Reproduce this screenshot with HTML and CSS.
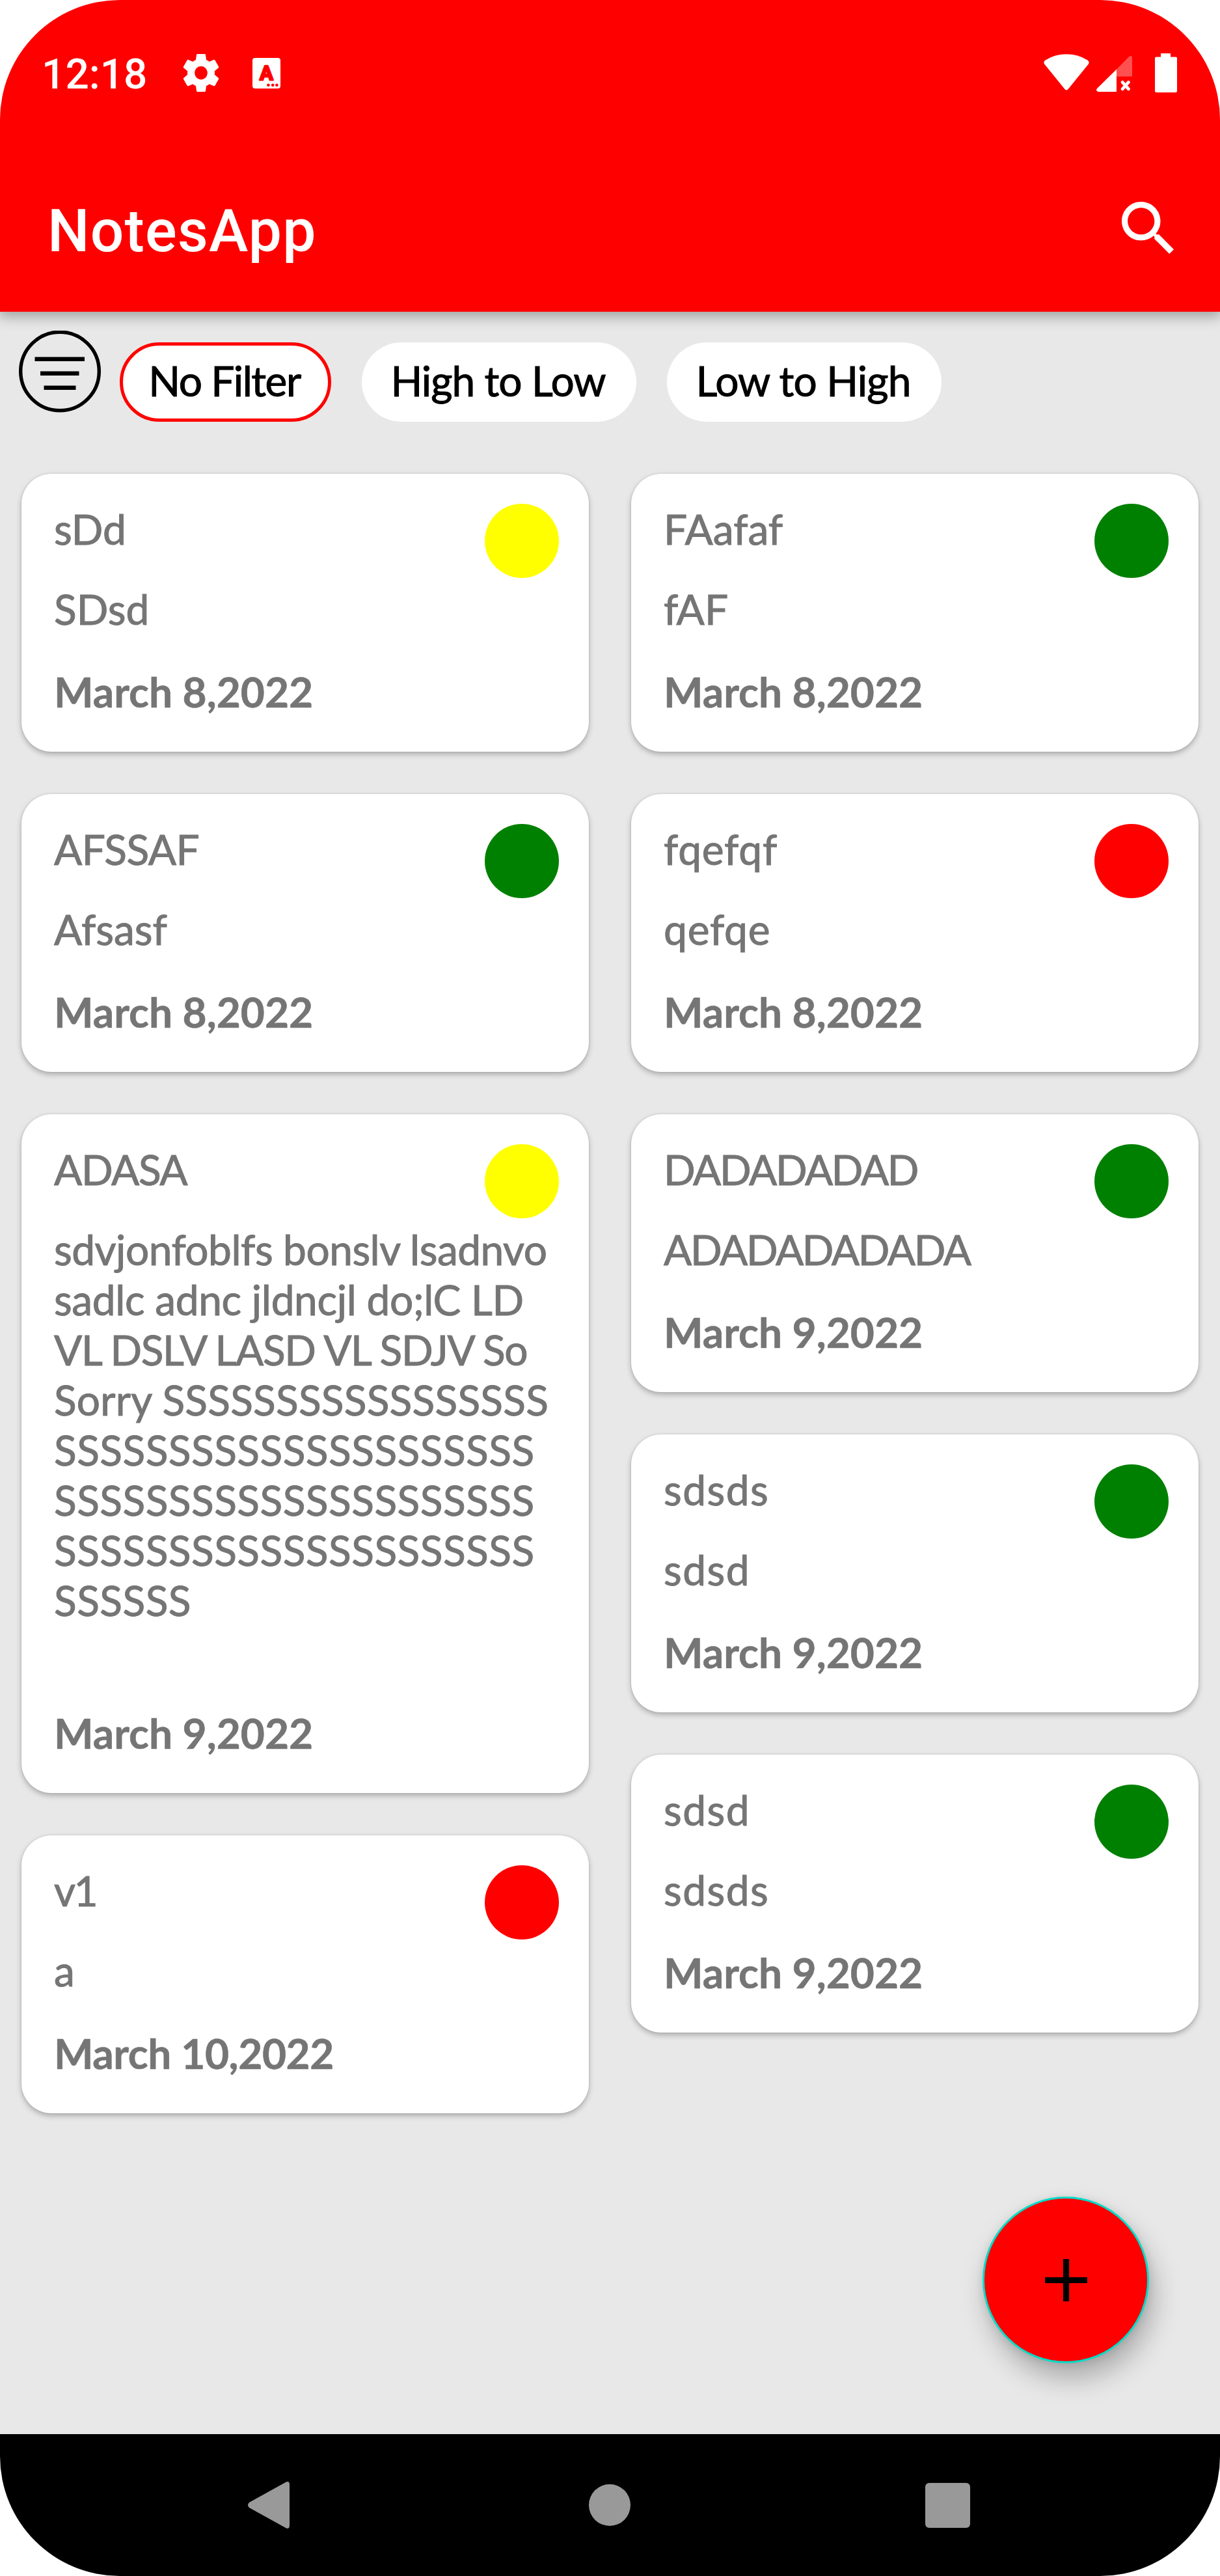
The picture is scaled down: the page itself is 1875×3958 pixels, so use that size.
FILE: index.html
```html
<!DOCTYPE html>
<html lang="en">
<head>
<meta charset="utf-8">
<title>NotesApp</title>
<link rel="stylesheet" href="styles.css">
</head>
<body>
<div class="screen">
  <header class="app-header">
    <div class="status-bar">
      <span class="clock">12:18</span>
      <svg class="icon-gear" viewBox="2 2 20 20" preserveAspectRatio="none" fill="#fff"><path d="M19.43 12.98c.04-.32.07-.64.07-.98s-.03-.66-.07-.98l2.11-1.65c.19-.15.24-.42.12-.64l-2-3.46c-.12-.22-.39-.3-.61-.22l-2.49 1c-.52-.4-1.08-.73-1.69-.98l-.38-2.65C14.46 2.18 14.25 2 14 2h-4c-.25 0-.46.18-.49.42l-.38 2.65c-.61.25-1.17.59-1.69.98l-2.49-1c-.23-.09-.49 0-.61.22l-2 3.46c-.13.22-.07.49.12.64l2.11 1.65c-.04.32-.07.65-.07.98s.03.66.07.98l-2.11 1.65c-.19.15-.24.42-.12.64l2 3.46c.12.22.39.3.61.22l2.49-1c.52.4 1.08.73 1.69.98l.38 2.65c.03.24.24.42.49.42h4c.25 0 .46-.18.49-.42l.38-2.65c.61-.25 1.17-.59 1.69-.98l2.49 1c.23.09.49 0 .61-.22l2-3.46c.12-.22.07-.49-.12-.64l-2.11-1.65zM12 15.5c-1.93 0-3.5-1.57-3.5-3.5s1.57-3.5 3.5-3.5 3.5 1.57 3.5 3.5-1.57 3.5-3.5 3.5z"/></svg>
      <svg class="icon-keyboard" viewBox="0 0 43 47"><rect width="43" height="47" rx="4" fill="#fff"/><text class="badge-letter" x="21.5" y="33.5" text-anchor="middle">A</text><g fill="#f00"><circle cx="24.4" cy="41.7" r="2.3"/><circle cx="31.2" cy="41.7" r="2.3"/><circle cx="37.4" cy="41.7" r="2.3"/></g></svg>
      <span class="spacer"></span>
      <svg class="icon-wifi" viewBox="0 0 70 56"><path d="M1.2 15.5Q-1 12 2.500 9.500Q17 .3 35 .3T67.500 9.500Q71 12 68.800 15.500L38 53.500Q35 57.500 32 53.500Z" fill="#fff"/></svg>
      <svg class="icon-signal" viewBox="0 0 55 55"><path d="M31 20.500V55H3Q-1.500 54 1 50Z" fill="#fff"/><path d="M31 20.500L50 1.200Q54 -1.500 55 2V31.500H31Z" fill="#ff5050"/><path d="M40 40.200L49.500 50.800M49.500 40.200L40 50.800" stroke="#fff" stroke-width="4.800" stroke-linecap="round"/></svg>
      <svg class="icon-battery" viewBox="0 0 34 60"><path d="M9 0H24V5.500H32Q34 5.500 34 7.500V58Q34 60 32 60H2Q0 60 0 58V7.500Q0 5.500 2 5.500H9Z" fill="#fff"/></svg>
    </div>
    <div class="toolbar">
      <h1 class="app-title">NotesApp</h1>
      <svg class="icon-search" viewBox="3 3 17.490 17.490" fill="#fff"><path d="M15.500 14h-.79l-.28-.27C15.410 12.590 16 11.110 16 9.500 16 5.910 13.090 3 9.500 3S3 5.910 3 9.500 5.910 16 9.500 16c1.610 0 3.090-.59 4.230-1.570l.27.28v.79l5 4.990L20.490 19l-4.990-5zm-6 0C7.010 14 5 11.990 5 9.500S7.010 5 9.500 5 14 7.010 14 9.500 11.990 14 9.500 14z"/></svg>
    </div>
  </header>

  <main class="content">
    <div class="filters">
      <svg class="icon-filter" viewBox="0 0 126 126" fill="none" stroke="#000"><circle cx="63" cy="62.500" r="60.300" stroke-width="5.400"/><path d="M24.500 43.700H101M33 65.700H92.500M38.500 87.700H87.500" stroke-width="6.500"/></svg>
      <button class="chip chip-none is-selected">No Filter</button>
      <button class="chip chip-high">High to Low</button>
      <button class="chip chip-low">Low to High</button>
    </div>

    <div class="board">
      <section class="column">
        <article class="note">
          <div class="note-text"><p>sDd</p><p>SDsd</p><time>March 8,2022</time></div>
          <span class="priority medium"></span>
        </article>
        <article class="note">
          <div class="note-text"><p class="caps-mixed">AFSSAF</p><p>Afsasf</p><time>March 8,2022</time></div>
          <span class="priority low"></span>
        </article>
        <article class="note">
          <div class="note-text"><p class="caps-short">ADASA</p>
            <p class="note-body"><span class="line prose">sdvjonfoblfs bonslv lsadnvo</span><span class="line prose-tight">sadlc adnc jldncjl do;lC LD</span><span class="line shout">VL DSLV LASD VL SDJV So</span><span class="line sorry">Sorry SSSSSSSSSSSSSSSSS</span><span class="line esses">SSSSSSSSSSSSSSSSSSSSS</span><span class="line esses">SSSSSSSSSSSSSSSSSSSSS</span><span class="line esses">SSSSSSSSSSSSSSSSSSSSS</span><span class="line esses">SSSSSS</span><span class="line">&nbsp;</span></p>
            <time>March 9,2022</time></div>
          <span class="priority medium"></span>
        </article>
        <article class="note">
          <div class="note-text"><p class="caps">v1</p><p>a</p><time class="long-date">March 10,2022</time></div>
          <span class="priority high"></span>
        </article>
      </section>
      <section class="column">
        <article class="note">
          <div class="note-text"><p>FAafaf</p><p>fAF</p><time>March 8,2022</time></div>
          <span class="priority low"></span>
        </article>
        <article class="note">
          <div class="note-text"><p class="loose">fqefqf</p><p class="loose">qefqe</p><time>March 8,2022</time></div>
          <span class="priority high"></span>
        </article>
        <article class="note">
          <div class="note-text"><p class="caps">DADADADAD</p><p class="caps">ADADADADADA</p><time>March 9,2022</time></div>
          <span class="priority low"></span>
        </article>
        <article class="note">
          <div class="note-text"><p class="looser">sdsds</p><p class="looser">sdsd</p><time>March 9,2022</time></div>
          <span class="priority low"></span>
        </article>
        <article class="note">
          <div class="note-text"><p class="looser">sdsd</p><p class="looser">sdsds</p><time>March 9,2022</time></div>
          <span class="priority low"></span>
        </article>
      </section>
    </div>

    <button class="fab" aria-label="Add note"><svg viewBox="0 0 65 65" stroke="#000" stroke-width="9.200"><path d="M32.500 0V65M0 32.500H65"/></svg></button>
  </main>

  <nav class="system-nav">
    <svg class="nav-back" viewBox="0 0 64 72" fill="#999"><path d="M2 32L58 1Q64 -2 64 5V67Q64 74 58 71L2 40Q-2 36 2 32Z"/></svg>
    <svg class="nav-home" viewBox="0 0 64 64" fill="#999"><circle cx="32" cy="32" r="32"/></svg>
    <svg class="nav-recent" viewBox="0 0 69 69" fill="#999"><rect width="69" height="69" rx="6"/></svg>
  </nav>
</div>
</body>
</html>
```
FILE: styles.css
```css
* { box-sizing: border-box; }
body { margin: 0; background: #fff; }
svg { display: block; flex: none; }
h1, p { margin: 0; }
button { border: 0; padding: 0; font: inherit; }

.screen {
  width: 1875px;
  height: 3958px;
  display: flex;
  flex-direction: column;
  overflow: hidden;
  border-radius: 184px;
  font-family: Lato, sans-serif;
  font-size: 64px;
  line-height: 77px;
}

.app-header {
  position: relative;
  z-index: 1;
  height: 479px;
  flex: none;
  background: #f00;
  color: #fff;
  font-family: Roboto, sans-serif;
  box-shadow: 0 5px 20px 2px rgba(0, 0, 0, .32);
}
.status-bar {
  display: flex;
  align-items: center;
  height: 224px;
  padding: 0 66px 0 64px;
}
.clock { font-size: 64px; font-weight: 500; width: 217px; padding-top: 4px; }
.icon-gear { width: 56px; height: 58px; }
.icon-keyboard { width: 43px; height: 47px; margin: 1px 0 0 51px; }
.badge-letter {
  font: bold 31px Roboto, sans-serif;
  fill: #f00;
  stroke: #f00;
  stroke-width: 2.5px;
  stroke-linejoin: round;
}
.spacer { flex: 1; }
.icon-wifi { width: 70px; height: 56px; margin-bottom: 2px; }
.icon-signal { width: 55px; height: 55px; margin: 3px 35px 0 11px; }
.icon-battery { width: 34px; height: 60px; }
.toolbar {
  display: flex;
  align-items: center;
  justify-content: space-between;
  height: 255px;
  padding: 0 71px 0 73px;
}
.app-title { font-size: 91px; line-height: 110px; font-weight: 500; letter-spacing: 1.2px; padding-top: 7px; }
.icon-search { width: 80px; height: 80px; margin-bottom: 3px; }

.content {
  position: relative;
  flex: 1;
  padding: 29px 33px 0 29px;
  background: #e8e8e8;
}
.filters { display: flex; align-items: flex-start; height: 220px; }
.icon-filter { width: 126px; height: 126px; }
.chip {
  height: 122px;
  margin: 18px 0 0 47px;
  padding: 0 3px 5px 0;
  border-radius: 61px;
  background: #fff;
  color: #000;
  -webkit-text-stroke: 1px #000;
}
.chip-none { width: 325px; margin-left: 29px; letter-spacing: -1.5px; }
.chip-high { width: 422px; letter-spacing: -1px; }
.chip-low { width: 422px; letter-spacing: -.9px; }
.is-selected { border: 5px solid #f00; }

.board {
  display: grid;
  grid-template-columns: 872px 872px;
  column-gap: 65px;
  margin-left: 4px;
}
.column { display: flex; flex-direction: column; gap: 65px; }
.note {
  display: flex;
  justify-content: space-between;
  padding: 46px 46px 54px 50px;
  border-radius: 46px;
  background: #fff;
  color: #757575;
  box-shadow: 0 4px 8px rgba(0, 0, 0, .26), 0 0 3px rgba(0, 0, 0, .12);
}
.note-text {
  display: flex;
  flex-direction: column;
  width: 0;
  white-space: nowrap;
  -webkit-text-stroke: 1px #757575;
}
.note-text p + p { margin-top: 46px; }
.note-text time { margin-top: 50px; font-weight: 700; -webkit-text-stroke: .6px #757575; }
.note-text .long-date { letter-spacing: -.4px; }
.line { display: block; }
.caps-mixed { letter-spacing: -.6px; }
.caps-short { letter-spacing: -1.4px; }
.caps { letter-spacing: -2.4px; }
.loose { letter-spacing: .8px; }
.looser { letter-spacing: 1.5px; }
.prose { letter-spacing: -.5px; }
.prose-tight { letter-spacing: -.35px; }
.shout { letter-spacing: -1.4px; }
.sorry { letter-spacing: .2px; }
.esses { letter-spacing: .45px; }

.priority { width: 114px; height: 114px; flex: none; border-radius: 50%; }
.high { background: #f00; }
.medium { background: #ff0; }
.low { background: #008000; }

.fab {
  position: absolute;
  right: 109px;
  bottom: 109px;
  width: 256px;
  height: 256px;
  display: flex;
  align-items: center;
  justify-content: center;
  border: 3px solid #00dcc8;
  border-radius: 50%;
  background: #f00;
  box-shadow: 8px 24px 40px rgba(0, 0, 0, .26), 0 2px 14px rgba(0, 0, 0, .1);
}
.fab svg { width: 65px; height: 65px; }

.system-nav {
  display: flex;
  align-items: center;
  justify-content: space-between;
  height: 218px;
  flex: none;
  padding: 0 384px 0 381px;
  background: #000;
}
.nav-back { width: 64px; height: 72px; }
.nav-home { width: 64px; height: 64px; margin-left: 6px; }
.nav-recent { width: 69px; height: 69px; }
```
